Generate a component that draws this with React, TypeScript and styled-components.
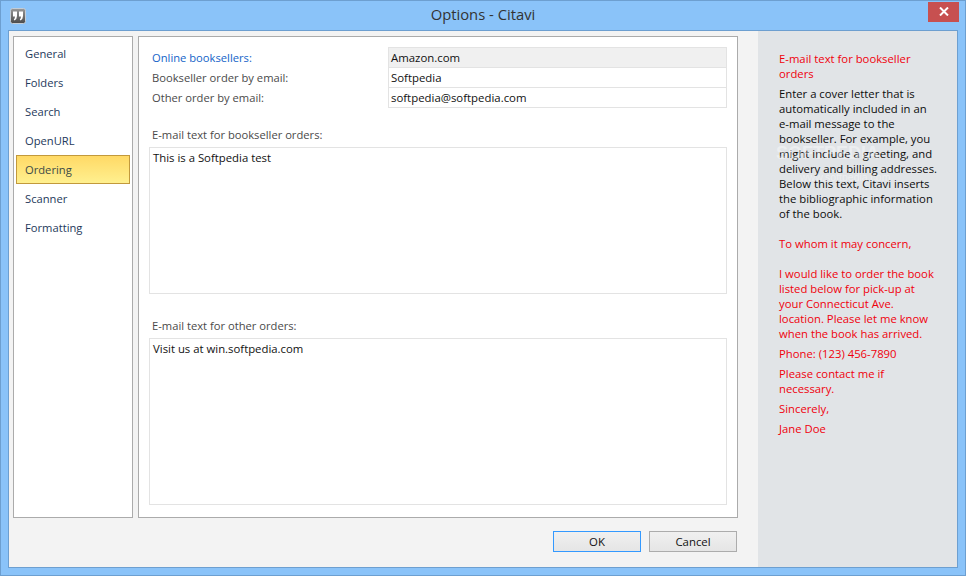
import React from 'react';
import styled, { createGlobalStyle } from 'styled-components';

const GlobalStyle = createGlobalStyle`
  html, body {
    margin: 0;
    padding: 0;
    background: #8ac3f9;
  }
  * {
    box-sizing: border-box;
  }
`;

const Frame = styled.div`
  width: 966px;
  height: 576px;
  display: flex;
  flex-direction: column;
  background: #8ac3f9;
  border: 1px solid #6d9fd0;
  padding: 0 7px 7px;
  font-family: "Open Sans", "Noto Sans", sans-serif;
  font-size: 11.2px;
  color: #1a1a1a;
  overflow: hidden;
`;

const TitleBar = styled.div`
  height: 29px;
  flex: none;
  display: grid;
  grid-template-columns: 40px 1fr 40px;
  align-items: center;
`;

const Title = styled.div`
  text-align: center;
  font-size: 14.8px;
  color: #333;
  padding: 0 0 3px 0;
`;

const AppIcon = styled.svg`
  display: block;
  margin: 0 0 0 2px;
`;

const CloseButton = styled.div`
  justify-self: end;
  width: 31px;
  height: 20px;
  margin: 0 -1px 8px 0;
  background: #c75050;
  display: flex;
  align-items: center;
  justify-content: center;
`;

const Client = styled.div`
  flex: 1;
  display: flex;
  background: #f3f3f3;
  border: 1px solid #6d9fd0;
  min-height: 0;
`;

const Workspace = styled.div`
  width: 749px;
  flex: none;
  display: flex;
  flex-direction: column;
  padding: 5px 20px 0 4px;
`;

const Panels = styled.div`
  height: 483px;
  display: flex;
  gap: 5px;
`;

const Nav = styled.nav`
  width: 120px;
  flex: none;
  background: #fff;
  border: 1px solid #ababab;
  padding: 2px 2px;
  display: flex;
  flex-direction: column;
`;

const NavItem = styled.div<{ $active?: boolean }>`
  height: 29px;
  padding: 0 10px 0 9px;
  display: flex;
  align-items: center;
  color: #1e395b;
  ${({ $active }) =>
    $active &&
    `
    background: linear-gradient(#ffd966, #fff08f);
    border: 1px solid #c2993c;
    padding-left: 8px;
    color: #3b4a46;
  `}
`;

const Main = styled.main`
  width: 600px;
  flex: none;
  background: #fff;
  border: 1px solid #ababab;
  padding: 10px 10px 12px 10px;
  display: flex;
  flex-direction: column;
`;

const FieldGrid = styled.div`
  display: grid;
  grid-template-columns: 236px 339px;
  grid-auto-rows: 20px;
  margin-left: 3px;
`;

const FieldLabel = styled.div<{ $link?: boolean }>`
  display: flex;
  align-items: center;
  color: ${({ $link }) => ($link ? '#1464c8' : '#4a4a4a')};
`;

const FieldValue = styled.div<{ $readonly?: boolean }>`
  display: flex;
  align-items: center;
  padding-left: 2px;
  border: 1px solid #e3e3e3;
  margin-bottom: -1px;
  font-size: 11.4px;
  color: #111;
  background: ${({ $readonly }) => ($readonly ? '#f0f0f0' : '#fff')};
`;

const SectionLabel = styled.div<{ $top: number }>`
  height: 20px;
  margin: ${({ $top }) => $top}px 0 3px 3px;
  display: flex;
  align-items: center;
  color: #4a4a4a;
`;

const TextBox = styled.div<{ $height: number }>`
  height: ${({ $height }) => $height}px;
  width: 578px;
  border: 1px solid #e3e3e3;
  padding: 2px 3px;
  line-height: 16px;
  font-size: 11.35px;
  color: #111;
`;

const Footer = styled.div`
  height: 50px;
  display: flex;
  justify-content: flex-end;
  align-items: flex-start;
  gap: 8px;
  padding: 13px 1px 0 0;
`;

const DialogButton = styled.button<{ $primary?: boolean }>`
  width: 88px;
  height: 21px;
  padding: 0;
  font: inherit;
  font-size: 11.4px;
  color: #111;
  background: linear-gradient(#f0f0f0, #e5e5e5);
  border: 1px solid ${({ $primary }) => ($primary ? '#3399ff' : '#acacac')};
`;

const Help = styled.aside`
  flex: 1;
  position: relative;
  background: #e1e4e7;
  padding: 20px 0 0 21px;
  font-size: 11.3px;
  line-height: 15px;
  white-space: nowrap;
`;

const HelpText = styled.p<{ $red?: boolean; $gap?: number }>`
  margin: 0 0 ${({ $gap }) => $gap ?? 0}px;
  color: ${({ $red }) => ($red ? '#f0000c' : '#0c0c0c')};
`;

// faint site stamp lying over the help text
const Watermark = styled.div`
  position: absolute;
  left: 18px;
  top: 112px;
  color: rgba(255, 255, 255, 0.4);
  font-family: "Liberation Sans", sans-serif;
  font-weight: bold;
  font-size: 18px;
  line-height: 20px;
`;

const WatermarkUrl = styled.div`
  margin: 7px 0 0 24px;
  font-weight: normal;
  font-size: 10.5px;
  line-height: 14px;
`;

const navItems = ['General', 'Folders', 'Search', 'OpenURL', 'Ordering', 'Scanner', 'Formatting'];

const App: React.FC = () => {
  return (
    <>
      <GlobalStyle />
      <Frame>
        <TitleBar>
          <AppIcon width="16" height="16" viewBox="0 0 16 16">
            <defs>
              <linearGradient id="iconFill" x1="0" y1="0" x2="0" y2="1">
                <stop offset="0" stopColor="#9a9a9a" />
                <stop offset="1" stopColor="#4a4a4a" />
              </linearGradient>
            </defs>
            <rect x="0.5" y="0.5" width="15" height="15" rx="2" fill="url(#iconFill)" stroke="#c4cdd6" />
            <path
              d="M3 3.5 H7 V8 Q7 11 4.5 12.5 L3.8 11.5 Q5 10.5 5 8.5 H3 Z M9 3.5 H13 V8 Q13 11 10.5 12.5 L9.8 11.5 Q11 10.5 11 8.5 H9 Z"
              fill="#fff"
            />
          </AppIcon>
          <Title>Options - Citavi</Title>
          <CloseButton>
            <svg width="10" height="9" viewBox="0 0 10 9">
              <path d="M1 0.5 L9 8.5 M9 0.5 L1 8.5" stroke="#fff" strokeWidth="2" />
            </svg>
          </CloseButton>
        </TitleBar>
        <Client>
          <Workspace>
            <Panels>
              <Nav>
                {navItems.map((item) => (
                  <NavItem key={item} $active={item === 'Ordering'}>
                    {item}
                  </NavItem>
                ))}
              </Nav>
              <Main>
                <FieldGrid>
                  <FieldLabel $link>Online booksellers:</FieldLabel>
                  <FieldValue $readonly>Amazon.com</FieldValue>
                  <FieldLabel>Bookseller order by email:</FieldLabel>
                  <FieldValue>Softpedia</FieldValue>
                  <FieldLabel>Other order by email:</FieldLabel>
                  <FieldValue>softpedia@softpedia.com</FieldValue>
                </FieldGrid>
                <SectionLabel $top={17}>E-mail text for bookseller orders:</SectionLabel>
                <TextBox $height={147}>This is a Softpedia test</TextBox>
                <SectionLabel $top={21}>E-mail text for other orders:</SectionLabel>
                <TextBox $height={167}>Visit us at win.softpedia.com</TextBox>
              </Main>
            </Panels>
            <Footer>
              <DialogButton $primary>OK</DialogButton>
              <DialogButton>Cancel</DialogButton>
            </Footer>
          </Workspace>
          <Help>
            <HelpText $red $gap={5}>
              E-mail text for bookseller
              <br />
              orders
            </HelpText>
            <HelpText $gap={15}>
              Enter a cover letter that is
              <br />
              automatically included in an
              <br />
              e-mail message to the
              <br />
              bookseller. For example, you
              <br />
              might include a greeting, and
              <br />
              delivery and billing addresses.
              <br />
              Below this text, Citavi inserts
              <br />
              the bibliographic information
              <br />
              of the book.
            </HelpText>
            <HelpText $red $gap={15}>To whom it may concern,</HelpText>
            <HelpText $red $gap={5}>
              I would like to order the book
              <br />
              listed below for pick-up at
              <br />
              your Connecticut Ave.
              <br />
              location. Please let me know
              <br />
              when the book has arrived.
            </HelpText>
            <HelpText $red $gap={5}>Phone: (123) 456-7890</HelpText>
            <HelpText $red $gap={5}>
              Please contact me if
              <br />
              necessary.
            </HelpText>
            <HelpText $red $gap={5}>Sincerely,</HelpText>
            <HelpText $red>Jane Doe</HelpText>
            <Watermark>
              SOFTPEDIA
              <WatermarkUrl>www.softpedia.com</WatermarkUrl>
            </Watermark>
          </Help>
        </Client>
      </Frame>
    </>
  );
};

export default App;
